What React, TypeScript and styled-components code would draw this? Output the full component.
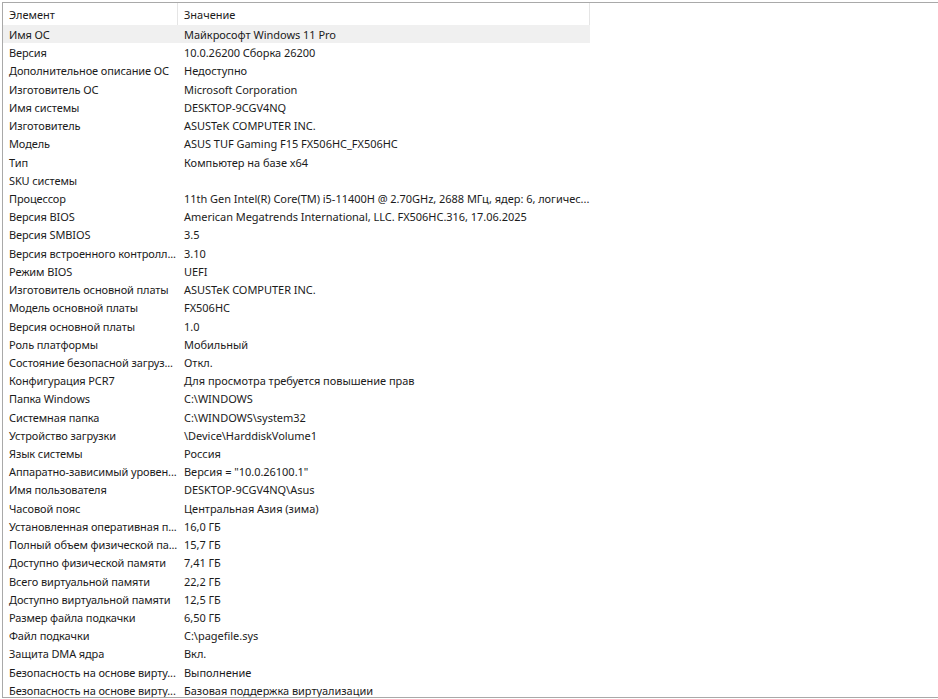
import React from "react";
import styled, { createGlobalStyle } from "styled-components";

const GlobalStyle = createGlobalStyle`
  html, body {
    margin: 0;
    padding: 0;
    background: #ffffff;
  }
  body {
    font-family: "Noto Sans", "Open Sans", "Liberation Sans", sans-serif;
    font-size: 11px;
    color: #1b1b1b;
  }
`;

const Page = styled.div`
  width: 938px;
  height: 699px;
  padding: 2px 0 0 2px;
  box-sizing: border-box;
  overflow: hidden;
`;

const ListView = styled.div`
  height: 696px;
  box-sizing: border-box;
  border-top: 1px solid #a9a9a9;
  border-left: 1px solid #a9a9a9;
  border-bottom: 1px solid #a9a9a9;
  overflow: hidden;
  background: #ffffff;
`;

const Header = styled.div`
  display: grid;
  grid-template-columns: 175px 412px;
  height: 22px;
`;

const HeaderCell = styled.div`
  display: flex;
  align-items: center;
  padding-left: 6px;
  border-right: 1px solid #e5e5e5;
  color: #1b1b1b;
  white-space: nowrap;
`;

const Row = styled.div<{ $selected?: boolean }>`
  display: grid;
  grid-template-columns: 175px 412px;
  height: 18.22px;
  background: ${(p) => (p.$selected ? "#f0f0f0" : "transparent")};
  width: 587px;
`;

const Cell = styled.div<{ $name?: boolean }>`
  padding: 1px 0 0 6px;
  white-space: nowrap;
  overflow: hidden;
  line-height: 18px;
  letter-spacing: ${(p) => (p.$name ? "-0.12px" : "-0.03px")};
`;

const ROWS: [string, string][] = [
  ["Имя ОС", "Майкрософт Windows 11 Pro"],
  ["Версия", "10.0.26200 Сборка 26200"],
  ["Дополнительное описание ОС", "Недоступно"],
  ["Изготовитель ОС", "Microsoft Corporation"],
  ["Имя системы", "DESKTOP-9CGV4NQ"],
  ["Изготовитель", "ASUSTeK COMPUTER INC."],
  ["Модель", "ASUS TUF Gaming F15 FX506HC_FX506HC"],
  ["Тип", "Компьютер на базе x64"],
  ["SKU системы", ""],
  ["Процессор", "11th Gen Intel(R) Core(TM) i5-11400H @ 2.70GHz, 2688 МГц, ядер: 6, логичес..."],
  ["Версия BIOS", "American Megatrends International, LLC. FX506HC.316, 17.06.2025"],
  ["Версия SMBIOS", "3.5"],
  ["Версия встроенного контролл...", "3.10"],
  ["Режим BIOS", "UEFI"],
  ["Изготовитель основной платы", "ASUSTeK COMPUTER INC."],
  ["Модель основной платы", "FX506HC"],
  ["Версия основной платы", "1.0"],
  ["Роль платформы", "Мобильный"],
  ["Состояние безопасной загруз...", "Откл."],
  ["Конфигурация PCR7", "Для просмотра требуется повышение прав"],
  ["Папка Windows", "C:\\WINDOWS"],
  ["Системная папка", "C:\\WINDOWS\\system32"],
  ["Устройство загрузки", "\\Device\\HarddiskVolume1"],
  ["Язык системы", "Россия"],
  ["Аппаратно-зависимый уровен...", "Версия = \"10.0.26100.1\""],
  ["Имя пользователя", "DESKTOP-9CGV4NQ\\Asus"],
  ["Часовой пояс", "Центральная Азия (зима)"],
  ["Установленная оперативная п...", "16,0 ГБ"],
  ["Полный объем физической па...", "15,7 ГБ"],
  ["Доступно физической памяти", "7,41 ГБ"],
  ["Всего виртуальной памяти", "22,2 ГБ"],
  ["Доступно виртуальной памяти", "12,5 ГБ"],
  ["Размер файла подкачки", "6,50 ГБ"],
  ["Файл подкачки", "C:\\pagefile.sys"],
  ["Защита DMA ядра", "Вкл."],
  ["Безопасность на основе вирту...", "Выполнение"],
  ["Безопасность на основе вирту...", "Базовая поддержка виртуализации"],
];

export default function App() {
  return (
    <>
      <GlobalStyle />
      <Page>
        <ListView>
          <Header>
            <HeaderCell>Элемент</HeaderCell>
            <HeaderCell>Значение</HeaderCell>
          </Header>
          {ROWS.map(([name, value], i) => (
            <Row key={i} $selected={i === 0}>
              <Cell $name>{name}</Cell>
              <Cell>{value}</Cell>
            </Row>
          ))}
        </ListView>
      </Page>
    </>
  );
}
